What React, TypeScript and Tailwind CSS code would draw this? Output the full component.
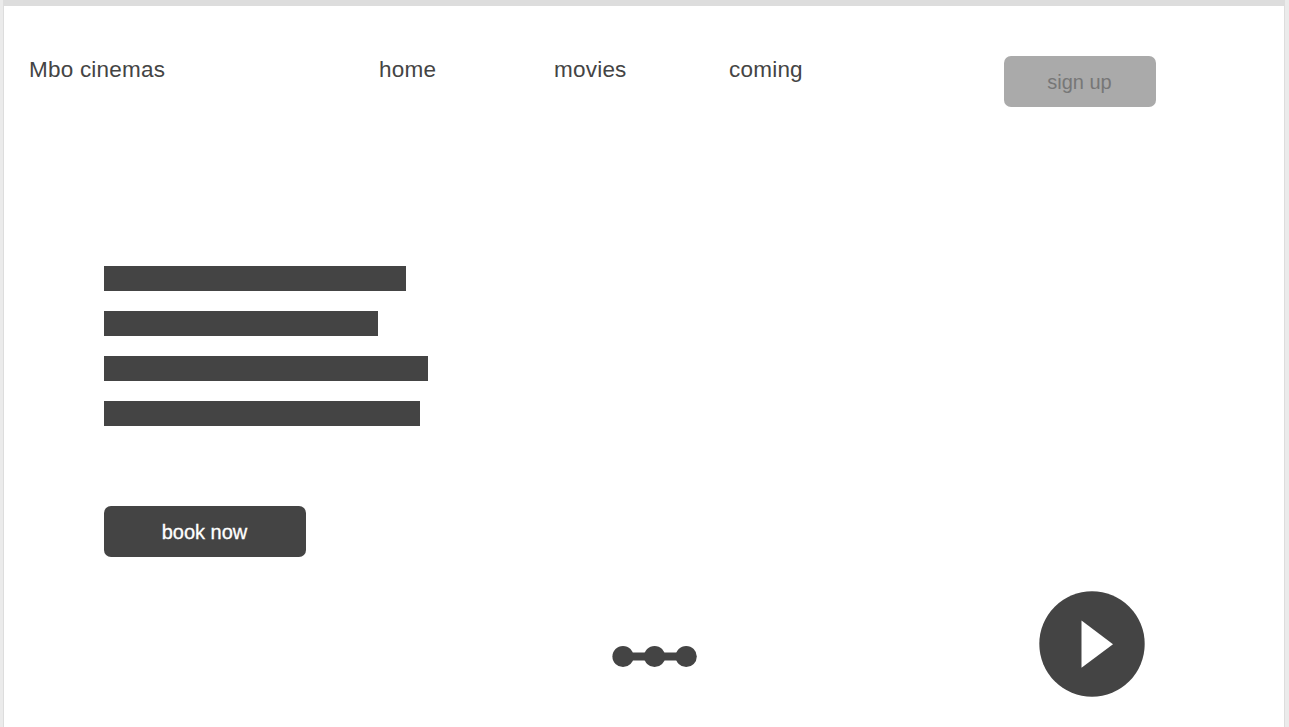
const bars = ['w-[302px]', 'w-[274px]', 'w-[324px]', 'w-[316px]'];

export default function App() {
  return (
    <div className="flex h-[727px] w-full flex-col overflow-hidden bg-[#ebebeb] pr-1 pl-[3px] font-['Liberation_Sans',sans-serif] text-[#444]">
      <div className="h-1.5 shrink-0 bg-[#ddd]" />
      <main className="flex flex-1 flex-col border-x border-[#ddd] bg-white">
        <header className="flex h-[260px] items-start pt-[50px] pl-[25px] text-[22.5px] leading-[27px] tracking-[0.22px]">
          <div className="w-[350px]">Mbo cinemas</div>
          <nav className="flex w-[625px]">
            <a className="w-[175px]">home</a>
            <a className="w-[175px]">movies</a>
            <a>coming</a>
          </nav>
          <button className="h-[51px] w-[152px] rounded-[7px] bg-[#aaa] pt-0.5 pr-px text-[20px] tracking-normal text-[#777]">sign up</button>
        </header>
        <section className="flex h-[240px] flex-col gap-5 pl-[100px]">
          {bars.map((width) => (
            <div key={width} className={`h-[25px] bg-[#444] ${width}`} />
          ))}
        </section>
        <button className="ml-[100px] h-[51px] w-[202px] shrink-0 rounded-[7px] bg-[#444] pr-px text-[20px] text-white [-webkit-text-stroke:0.3px_white]">book now</button>
        <footer className="flex items-start pt-[34px] pl-[608px]">
          <svg className="mt-[54px] mr-[340px] h-[23px] w-[86px]" viewBox="0 0 86 23" fill="#444">
            <path d="M11 7.5h63v8H11z" />
            <circle cx="11" cy="11.5" r="10.6" />
            <circle cx="42.6" cy="11.5" r="10.6" />
            <circle cx="74.2" cy="11.5" r="10.6" />
          </svg>
          <svg className="h-[106px] w-[107px]" viewBox="0 0 107 106">
            <circle cx="54" cy="53" r="52.7" fill="#444" />
            <path d="M43.5 29.5v47.3L75 53.2z" fill="#fff" />
          </svg>
        </footer>
      </main>
    </div>
  );
}
